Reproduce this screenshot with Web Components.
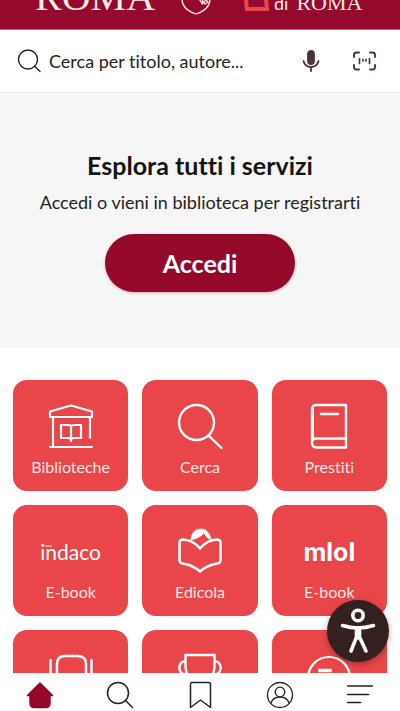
<!DOCTYPE html>
<html lang="it">
<head>
<meta charset="utf-8">
<meta name="viewport" content="width=device-width, initial-scale=1">
<title>Biblioteche di Roma</title>
<style>
  html, body { margin: 0; height: 100%; }
  body { background: #fff; color: #252321; font-family: Lato, "Liberation Sans", sans-serif; font-variant-ligatures: none; overflow: hidden; }
</style>
</head>
<body>
<library-app></library-app>

<script>
const define = (name, html) => {
  const template = document.createElement('template');
  template.innerHTML = '<style>*{box-sizing:border-box}svg{display:block;flex:none;overflow:visible;fill:none;stroke:currentColor;stroke-linecap:round;stroke-linejoin:round}</style>' + html;
  customElements.define(name, class extends HTMLElement {
    constructor() {
      super();
      this.attachShadow({ mode: 'open' }).append(template.content.cloneNode(true));
    }
  });
};

define('brand-header', `
<style>
  :host { display: flex; align-items: flex-end; height: 30px; flex: none; overflow: hidden;
    padding: 0 36px 19px 35px; background: #94092c; border-bottom: 1px solid #a9717e; color: #f9ece9; }
  .city { font: 40px/20px "Liberation Serif", serif; height: 23px; }
  .shield { margin: 0 33px -5px 26px; }
  .book { color: #e9464c; stroke-linejoin: miter; margin-bottom: -1px; }
  .library { display: flex; gap: 8px; align-items: baseline; height: 17px; margin-left: 4px; font: 18px/20px Lato, sans-serif; }
  .library span:last-child { font-family: "Liberation Serif", serif; font-size: 22px; }
</style>
<div class="city">ROMA</div>
<svg class="shield" width="30" height="34" viewBox="0 0 30 34" stroke-width="1.300"><path d="M1 1v17c0 7 5 12 14 15 9-3 14-8 14-15V1zM18 18l3 4 1-4M22 21l2 2M21 23l4-4 2 2-3 2"/></svg>
<svg class="book" width="26" height="30" viewBox="0 0 26 30" stroke-width="4"><path d="M1 10l2 18h20l-2-18"/></svg>
<div class="library"><span>di</span><span>ROMA</span></div>`);

define('search-bar', `
<style>
  :host { display: block; flex: none; background: #fff; border-bottom: 1px solid #e9e9e9; }
  form { display: flex; align-items: center; height: 62px; padding: 0 22px 0 17px; }
  label { display: flex; flex: 1; align-items: center; gap: 8px; min-width: 0; }
  input { flex: 1; min-width: 0; border: 0; outline: 0; padding: 0; background: none; font: 18px/24px Lato, sans-serif; font-variant-ligatures: none; color: #252321; }
  input::placeholder { color: #252321; opacity: 1; }
  button { border: 0; padding: 0; background: none; color: #4b3438; margin-left: 30px; }
</style>
<form role="search">
  <label>
    <svg width="24" height="24" viewBox="0 0 24 24" stroke-width="1.4"><circle cx="11" cy="10.500" r="9.500"/><path d="M17.500 17l5.500 5.500"/></svg>
    <input type="search" aria-label="Cerca" placeholder="Cerca per titolo, autore...">
  </label>
  <button type="button" aria-label="Ricerca vocale"><svg width="20" height="24" viewBox="0 0 20 24" stroke-width="1.800"><rect x="8" y="2" width="6" height="13" rx="3" fill="currentColor"/><path d="M3.500 12c1 4 4 6 7.500 6s6.500-2 7.500-6M11 18v4"/></svg></button>
  <button type="button" aria-label="Scansiona codice"><svg width="28" height="24" viewBox="0 0 28 24" stroke-width="1.900"><path d="M4 8V6q0-2.500 2.500-2.500H9M20 3.500h2.500Q25 3.500 25 6v2M25 16v2q0 2.500-2.500 2.500H20M9 20.500H6.500Q4 20.500 4 18v-2"/><path d="M9.500 9.500v5M13 10.500v1.500M16 10.500v1.500M19.500 9.500v5" stroke-width="1.700"/></svg></button>
</form>`);

define('login-hero', `
<style>
  :host { display: flex; flex-direction: column; align-items: center; padding: 57px 16px 56px; background: #f6f6f6; text-align: center; }
  h1 { margin: 0; font-size: 25px; line-height: 30px; font-weight: 700; color: #151413; }
  p { margin: 10px 0 20px; font-size: 18px; line-height: 24px; }
  button { border: 0; border-radius: 32px; width: 190px; height: 58px; padding: 0; background: #94082a; color: #fff; font: 700 25px/30px Lato, sans-serif; box-shadow: 0 1px 3px #94082a55; }
</style>
<h1><slot name="title"></slot></h1>
<p><slot></slot></p>
<button type="button"><slot name="action"></slot></button>`);

define('service-tile', `
<style>
  :host { display: block; }
  a { display: flex; flex-direction: column; align-items: center; height: 111px; padding-top: 22px; gap: 4px; border-radius: 14px; background: #e9464b; color: #fff; text-decoration: none; font-size: 16px; line-height: 22px; }
  .art { display: grid; place-items: center; height: 50px; }
  .label { color: #fde8e3; }
</style>
<a href="#"><span class="art"><slot name="icon"></slot></span><span class="label"><slot></slot></span></a>`);

define('service-grid', `
<style>
  :host { display: grid; grid-template-columns: repeat(3, 1fr); gap: 14px; padding: 32px 13px; background: #fff; }
  .indaco { position: relative; font: 400 21px/24px Lato, sans-serif; }
  .indaco::before { content: ""; position: absolute; left: 5px; top: 5px; width: 7px; height: 2px; background: #f6a08f; }
  .mlol { font: 700 25px/28px Inter, sans-serif; }
</style>
<service-tile><svg slot="icon" width="46" height="48" viewBox="0 0 46 48" stroke-width="2.200"><path d="M2 14V8.500L23 2.500l21 6V14zM5 15v29M42 15v20M2 44h42M13 22h7q3 0 3 2 0-2 3-2h7v13h-7q-3 0-3 2 0-2-3-2h-7zM23 24v14"/></svg>Biblioteche</service-tile>
<service-tile><svg slot="icon" width="46" height="46" viewBox="0 0 46 46" stroke-width="2.400"><circle cx="19.500" cy="18.500" r="17.500"/><path d="M31.500 31.500l13 12.500"/></svg>Cerca</service-tile>
<service-tile><svg slot="icon" width="38" height="46" viewBox="0 0 38 46" stroke-width="2.400"><path d="M36 1H6Q2 1 2 5V39q0 4.500 4.500 4.500H36zM36 34.500H6.500Q2 34.500 2 39M11 10h17"/><path d="M3 5v30" stroke-width="2"/></svg>Prestiti</service-tile>
<service-tile><span slot="icon" class="indaco">indaco</span>E-book</service-tile>
<service-tile><svg slot="icon" width="46" height="46" viewBox="0 0 46 46" stroke-width="2.600"><path d="M23 19.500C18 13 12 11 6 10.500q-3.500 0-3.500 3.500v17q0 3 3 3.500c7 1 12 3 17.500 8C28.500 37.500 33.500 35.500 40.500 34.500q3-.5 3-3.500V14q0-3.500-3.500-3.500-10 .5-17 9z"/><path d="M14 11C14 4 18 0 24 0c6 0 9 5 10 10l-2 0q-3-2-5-6-4 5-13 7z" fill="currentColor" stroke-width=".6"/></svg>Edicola</service-tile>
<service-tile><span slot="icon" class="mlol">mlol</span>E-book</service-tile>
<service-tile aria-label="Galleria"><svg slot="icon" width="46" height="46" viewBox="0 0 46 46" stroke-width="2.500"><path d="M2.500 6v34M43.500 6v34M9 41V10q0-8 8-8h12q9 0 9 8v31z"/></svg></service-tile>
<service-tile aria-label="Premi"><svg slot="icon" width="46" height="46" viewBox="0 0 46 46" stroke-width="2.400" style="stroke-linejoin:miter"><path d="M8.500 1h29v10c0 12-6 18-14.500 18S8.500 23 8.500 11zM8.500 7C0 7 0 22 11 21M37.500 7c8.500 0 8.500 15-2.500 14M23 29v13M13 43h20"/></svg></service-tile>
<service-tile aria-label="Informazioni"><svg slot="icon" width="46" height="46" viewBox="0 0 46 46" stroke-width="2.200"><circle cx="23" cy="24" r="21"/><path d="M14 16.500h10" stroke-width="3.500" style="stroke-linecap:square"/></svg></service-tile>`);

define('access-button', `
<style>
  :host { position: absolute; right: 11px; bottom: 11px; }
  button { display: grid; place-items: center; width: 62px; height: 62px; border: 0; padding: 0; border-radius: 50%; background: #33201f; color: #fff; box-shadow: 0 2px 6px #0005; }
</style>
<button type="button" aria-label="Accessibilità"><svg width="36" height="46" viewBox="0 0 36 46" stroke-width="3.600"><circle cx="18" cy="7.500" r="5.200"/><path d="M2.500 17.500Q18 22.500 33.500 17.500"/><path d="M11 43l5.500-14V20h3v9L26 43M17 30h2" /></svg></button>`);

define('bottom-nav', `
<style>
  :host { display: block; flex: none; background: #fff; }
  nav { display: grid; grid-template-columns: repeat(5, 1fr); height: 38px; }
  a { display: grid; place-items: center; padding-top: 6px; color: #252321; }
  .current { color: #94082a; }
</style>
<nav aria-label="Principale">
  <a class="current" href="#" aria-label="Home"><svg width="28" height="28" viewBox="0 0 28 28" stroke-width="1.500"><path fill="currentColor" d="M4 14.500V22q0 4.500 4.500 4.500h11Q24 26.500 24 22v-7.500l2.500 0L14 2 1.500 14.500z"/></svg></a>
  <a href="#" aria-label="Cerca"><svg width="28" height="28" viewBox="0 0 28 28" stroke-width="1.500"><circle cx="12" cy="12" r="10.500"/><path d="M19.500 19.500l7 7"/></svg></a>
  <a href="#" aria-label="Salvati"><svg width="28" height="28" viewBox="0 0 28 28" stroke-width="1.500"><path d="M5.500 1.500h17q2 0 2 2v23L14.500 19 4.500 26.500v-23q0-2 1-2z"/></svg></a>
  <a href="#" aria-label="Profilo"><svg width="28" height="28" viewBox="0 0 28 28" stroke-width="1.300"><circle cx="14" cy="14" r="12.500"/><circle cx="14" cy="11" r="4.800"/><path d="M5 22q2-6 9-6t9 6"/></svg></a>
  <a href="#" aria-label="Menu"><svg width="28" height="28" viewBox="0 0 28 28" stroke-width="1.500"><path d="M1.500 5h25M1.500 13.500h21M1.500 21.500h13"/></svg></a>
</nav>`);

define('library-app', `
<style>
  :host { display: flex; flex-direction: column; height: 100vh; }
  .content { position: relative; flex: 1; min-height: 0; }
  main { height: 100%; overflow: hidden; }
</style>
<brand-header></brand-header>
<search-bar></search-bar>
<div class="content">
  <main>
    <login-hero><span slot="title">Esplora tutti i servizi</span>Accedi o vieni in biblioteca per registrarti<span slot="action">Accedi</span></login-hero>
    <service-grid></service-grid>
  </main>
  <access-button></access-button>
</div>
<bottom-nav></bottom-nav>`);
</script>
</body>
</html>
